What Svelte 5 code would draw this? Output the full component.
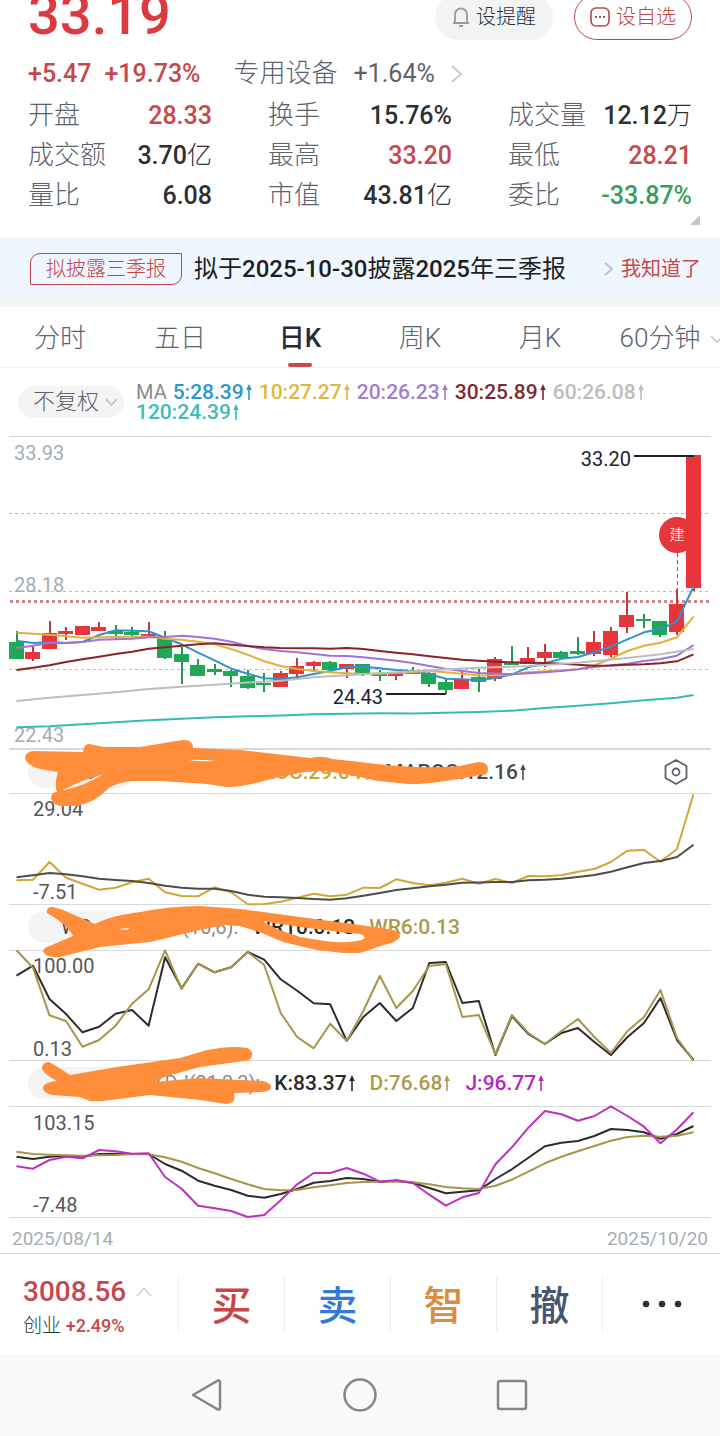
<script>
  // label, figure, unit, tone
  const stats = [
    ['开盘', '28.33', '', 'up'], ['换手', '15.76%', '', ''], ['成交量', '12.12', '万', ''],
    ['成交额', '3.70', '亿', ''], ['最高', '33.20', '', 'up'], ['最低', '28.21', '', 'up'],
    ['量比', '6.08', '', ''], ['市值', '43.81', '亿', ''], ['委比', '-33.87%', '', 'down']
  ];
  const tabs = ['分时', '五日', '日K', '周K', '月K', '60分钟'];
  let active = $state('日K');

  const averages = [
    ['5:28.39', '#2b97cf'], ['10:27.27', '#dcb93c'], ['20:26.23', '#a07fd0'],
    ['30:25.89', '#7f2a2e'], ['60:26.08', '#bdbdbd'], ['120:24.39', '#3dbdb6']
  ];

  const STEP = 677 / 41;
  const px = (i) => 16.5 + i * STEP;
  const line = (ys) => ys.map((y, i) => `${px(i).toFixed(1)},${y}`).join(' ');
  const sparse = (pts) => pts.map(([i, y]) => `${px(i).toFixed(1)},${y}`).join(' ');

  // direction, body top, body bottom, wick top, wick bottom
  const candles = [
    ['g', 642, 659, 631, 659], ['r', 652, 659, 646, 661], ['r', 633, 649, 621, 649], ['r', 631, 634, 627, 640],
    ['r', 626, 635, 626, 635], ['r', 627, 631, 622, 631], ['g', 631, 634, 625, 639], ['g', 632, 635, 627, 636],
    ['r', 634, 636, 622, 636], ['g', 639, 658, 631, 659], ['g', 654, 662, 647, 684], ['g', 665, 676, 659, 676],
    ['g', 669, 672, 664, 675], ['g', 671, 676, 670, 687], ['g', 676, 688, 670, 689], ['g', 683, 685, 673, 692],
    ['r', 673, 687, 671, 687], ['r', 666, 674, 658, 677], ['r', 662, 666, 661, 671], ['g', 662, 670, 661, 672],
    ['r', 664, 669, 664, 678], ['g', 664, 673, 664, 676], ['g', 674, 676, 670, 681], ['r', 673, 676, 673, 680],
    ['g', 672, 674, 667, 674], ['g', 673, 684, 672, 687], ['g', 682, 690, 679, 694], ['r', 679, 689, 670, 689],
    ['g', 677, 682, 669, 692], ['r', 659, 679, 657, 681], ['g', 663, 665, 646, 665], ['r', 658, 664, 647, 664],
    ['r', 652, 658, 644, 667], ['g', 652, 658, 651, 658], ['g', 651, 654, 637, 655], ['r', 642, 654, 631, 656],
    ['r', 631, 655, 627, 657], ['r', 615, 627, 592, 633], ['g', 619, 621, 614, 628], ['g', 621, 635, 621, 637],
    ['r', 604, 632, 589, 635], ['r', 455, 588, 455, 591]
  ];

  const ma5 = [640.7, 643, 642, 643, 642, 635, 630.3, 630.7, 631.3, 637.7, 644.3, 652.7, 660.3, 668.7, 673.7, 678.3, 679, 677.3, 674, 671, 667, 666.7, 668.3, 670, 671, 674, 678.7, 679.3, 680.3, 678, 674.3, 667.3, 663.3, 658.7, 657, 652.3, 646.7, 639.3, 632.3, 629, 621.3, 586.7];
  const ma10 = [632.7, 633.7, 634.7, 636.3, 637.7, 637.3, 637, 636.7, 636.7, 638.7, 639.7, 641.7, 644.3, 649, 654.7, 661.3, 666, 669, 671, 672.3, 673.3, 674, 673.5, 673, 672, 671, 672.3, 673.7, 675.5, 675.3, 674.3, 672.3, 671.3, 670.3, 669.3, 665.3, 658.7, 651, 645.7, 642.7, 637.3, 616.7];
  const ma20 = [648, 645.7, 642.7, 643, 642, 639.7, 639.3, 638.7, 637.3, 637, 635.7, 637, 638.7, 641.7, 646, 649, 651, 652.3, 654, 655.7, 656, 657.3, 659, 660.7, 663, 666, 668.7, 671, 673, 673.5, 674.3, 673.3, 672.3, 671, 669.3, 667, 665.3, 663.7, 661, 659, 655.7, 645];
  const ma30 = [670, 667.7, 665.3, 662, 659.3, 656.7, 654, 651.7, 648.7, 647.3, 645.7, 644.3, 643.3, 644.7, 646, 647.3, 648, 648.3, 648.3, 648.7, 648, 649, 651, 652.7, 654.3, 656.3, 658, 659.7, 660.7, 661.7, 662.3, 662.7, 663, 663.7, 664.7, 665.7, 665.5, 664.7, 664.3, 663.3, 661.3, 654.3];
  const ma60 = [[0, 701], [2, 697.7], [4, 695], [6, 692.3], [8, 689], [10, 686.7], [12, 684.7], [14, 682.5], [16, 680.7], [18, 677.3], [20, 675.3], [22, 673.3], [24, 671.3], [26, 669.3], [28, 667.7], [31, 666], [33, 664], [35, 661.3], [37, 658], [39, 654.3], [41, 649]];
  const ma120 = [[0, 727.3], [2, 726.3], [4, 724.3], [6, 722.3], [8, 720.3], [10, 718.7], [12, 717.3], [14, 716.3], [16, 715.5], [18, 714.3], [20, 713.7], [22, 713.3], [24, 713.5], [26, 712.7], [28, 712], [30, 710.7], [32, 708], [34, 705.7], [36, 703.3], [38, 700.3], [40, 697.7], [41, 695]];

  const roc = [880.3, 879.7, 862, 877.7, 883.7, 889.7, 887.7, 882.3, 878.7, 892.3, 896, 896.3, 887.3, 892.3, 904.3, 904, 901.7, 897.7, 893.7, 896.3, 894.7, 887.7, 888, 879.3, 883, 885.3, 882.7, 878.7, 883.7, 879, 883, 876, 876.3, 875.3, 871.7, 869, 862, 850.7, 850, 861.7, 849, 794.3];
  const maroc = [877.3, 875.3, 873, 874.3, 876.3, 878.7, 880, 881, 883, 885.7, 887.7, 888.7, 888.7, 891, 894.7, 896.7, 897.3, 898, 899, 899.7, 898.3, 895.7, 893, 890, 888.3, 886.3, 884.7, 882.7, 882.5, 882, 882, 880.3, 879.7, 878.7, 877, 875, 871.7, 867.3, 863, 861, 857, 844.7];
  const wr10 = [975.7, 965.7, 999, 1014, 1032.3, 1026.7, 1013.7, 1010, 1025.7, 957.3, 988.3, 963.7, 972.3, 967.3, 952, 959.7, 979.3, 990.7, 1003.3, 1004.3, 1041, 1017, 1003, 1021, 1008, 963, 962, 1003, 1001, 1055, 1016, 1034, 1044, 1033, 1028, 1042, 1055, 1037, 1023, 998, 1040, 1060];
  const wr6 = [950.3, 967.7, 1015.3, 1021, 1046.7, 1040, 1025.7, 1003.7, 989.3, 950.3, 989, 963.7, 972.3, 967.3, 952, 965, 1013, 1037, 1048.3, 1023.7, 1041, 1011, 976, 1008, 991, 966, 964, 1017, 1015, 1054, 1015, 1033, 1044, 1031, 1019, 1037, 1053, 1031, 1017, 990, 1038, 1061];
  const kLine = [1156.7, 1159, 1156.7, 1155.7, 1156.7, 1154, 1153.7, 1154, 1154, 1164, 1170.7, 1180.7, 1185.7, 1190, 1195.7, 1197.7, 1194, 1189, 1182.7, 1181, 1178, 1179, 1181.7, 1181, 1182.7, 1188, 1193.3, 1191.7, 1190.3, 1179, 1169.3, 1157.7, 1146.3, 1142.7, 1141, 1136, 1129, 1130, 1132.3, 1138.7, 1134, 1126];
  const dLine = [1151.7, 1154, 1154.7, 1155.3, 1155.7, 1155.3, 1155, 1154.3, 1154.3, 1157.3, 1161.7, 1168, 1173.3, 1179, 1184.3, 1189, 1190.3, 1190, 1187.3, 1185.3, 1183, 1182, 1181.7, 1181.3, 1182.3, 1184.3, 1187, 1188.3, 1189, 1185.7, 1179.7, 1171.7, 1163.3, 1156.7, 1151.3, 1146, 1140.7, 1137, 1135.7, 1136.7, 1135.7, 1132.3];
  const jLine = [1166.3, 1168.7, 1160, 1156.7, 1158.3, 1150, 1151.3, 1153.7, 1153.3, 1177, 1188.7, 1205.7, 1208.3, 1211, 1217, 1215, 1200.3, 1184.3, 1173, 1173, 1168, 1173.7, 1181.7, 1180, 1183, 1194.7, 1205.7, 1197.3, 1193, 1164.3, 1147.3, 1127.7, 1111, 1114.3, 1120.7, 1116, 1106.3, 1116, 1126.7, 1143.3, 1129.3, 1112.3];

  const actions = [['买', '#c94545'], ['卖', '#337ad8'], ['智', '#d98d3e'], ['撤', '#47566e']];
</script>

{#snippet arrow()}
  <svg class="arrow" viewBox="0 0 8 16" aria-hidden="true"><path d="M4 0 6.800 6H4.800V16H3.200V6H1.200Z" fill="currentColor" /></svg>
{/snippet}

{#snippet reading(text, color, up)}
  <span class="reading" style:color={color}>{text}{#if up}{@render arrow()}{/if}</span>
{/snippet}

<main>
  <section class="quote">
    <div class="top">
      <strong class="price">33.19</strong>
      <button class="pill remind">
        <svg width="18" height="20" viewBox="0 0 18 20" fill="none" stroke="#9b9b9b" stroke-width="1.800" aria-hidden="true">
          <path d="M1 16H17M3 16V7.500a6 6 0 0 1 12 0V16M7 19H11" />
        </svg>
        设提醒
      </button>
      <button class="pill watch">
        <svg width="20" height="20" viewBox="0 0 20 20" fill="none" stroke="currentColor" aria-hidden="true">
          <rect x="1" y="1" width="18" height="18" rx="5" stroke-width="1.600" />
          <path d="M5 10h2M9 10h2M13 10h2" stroke-width="2" />
        </svg>
        设自选
      </button>
    </div>
    <div class="change">
      <span class="num up">+5.47</span>
      <span class="num up">+19.73%</span>
      <a class="sector" href="#sector">专用设备 <span>+1.64%</span>
        <svg width="12" height="20" viewBox="0 0 12 20" fill="none" stroke="#c9cbce" stroke-width="2" aria-hidden="true"><path d="M1 2 10 10 1 18" /></svg>
      </a>
    </div>
    <dl class="stats">
      {#each stats as [label, figure, unit, tone]}
        <div><dt>{label}</dt><dd class={tone}>{figure}{#if unit}<span>{unit}</span>{/if}</dd></div>
      {/each}
    </dl>
    <svg class="corner" width="10" height="10" viewBox="0 0 10 10" aria-hidden="true"><path d="M10 0V10H0Z" fill="#c4c8cb" /></svg>
  </section>

  <section class="notice">
    <span class="tag">拟披露三季报</span>
    <a class="headline" href="#report">拟于<b>2025-10-30</b>披露<b>2025</b>年三季报</a>
    <svg width="9" height="14" viewBox="0 0 9 14" fill="none" stroke="#bcc2c9" stroke-width="2" aria-hidden="true"><path d="M1 1 8 7 1 13" /></svg>
    <button class="ack">我知道了</button>
  </section>

  <nav class="tabs">
    {#each tabs as tab}
      <button class:active={active === tab} onclick={() => (active = tab)}>{tab}</button>
    {/each}
    <svg class="more" width="12" height="8" viewBox="0 0 12 8" fill="none" stroke="#c4c7ca" stroke-width="1.500" aria-hidden="true"><path d="M1 1 7 7 13 1" /></svg>
  </nav>

  <section class="averages">
    <button class="adjust">不复权
      <svg width="13" height="8" viewBox="0 0 13 8" fill="none" stroke="#b9bbbe" stroke-width="1.500" aria-hidden="true"><path d="M1 1 6.500 7 12 1" /></svg>
    </button>
    <div class="legend">
      <span class="ma">MA</span>
      {#each averages as [text, color]}{@render reading(text, color, true)}{/each}
    </div>
  </section>

  <section class="charts">
    <svg class="plot" viewBox="0 436 720 312" role="img" aria-label="日K线">
      <path class="rule" d="M9 436.500H711" />
      <path d="M9 513.500H711M9 591.500H711M9 669.500H711" stroke="#b9bfc2" stroke-dasharray="3 3" />
      <path d="M10 601.500H711" stroke="#c98a88" stroke-width="3" stroke-dasharray="3 3" />
      <g class="axis soft">
        <text x="14" y="460">33.93</text><text x="14" y="592">28.18</text><text x="14" y="742">22.43</text>
      </g>
      <circle cx="677" cy="535" r="18" fill="#e8343b" />
      <path d="M677.500 553V590" stroke="#ad4b50" stroke-dasharray="4 3" />
      {#each candles as [dir, top, bottom, high, low], i}
        <g fill={dir === 'r' ? '#e8343b' : '#1fa855'}>
          <rect x={Math.round(px(i)) - 1} y={high} width="2" height={low - high} fill={dir === 'r' ? '#c13c40' : '#2b9350'} />
          <rect x={Math.round(px(i)) - 8} y={top} width="15" height={bottom - top} />
        </g>
      {/each}
      <text class="mark" x="677" y="540" text-anchor="middle">建</text>
      <g class="curve">
        <polyline points={line(ma5)} stroke="#2f93cc" />
        <polyline points={line(ma10)} stroke="#e2b23a" />
        <polyline points={line(ma20)} stroke="#a173d6" />
        <polyline points={line(ma30)} stroke="#8b2328" />
        <polyline points={sparse(ma60)} stroke="#bdbdbd" />
        <polyline points={sparse(ma120)} stroke="#34bdb8" />
      </g>
      <path d="M634 456H694M386 694H446" stroke="#20202c" stroke-width="2" />
      <g class="axis dark">
        <text x="631" y="466" text-anchor="end">33.20</text><text x="383" y="704" text-anchor="end">24.43</text>
      </g>
    </svg>

    <div class="bar thick">
      <button class="chip">ROC</button>
      <div class="values">
        <span class="formula">ROC(12,6):</span>
        {@render reading('ROC:29.04', '#c3a62f', true)}
        {@render reading('MAROC:12.16', '#4a4a4a', true)}
      </div>
      <button class="settings" aria-label="指标设置">
        <svg width="24" height="26" viewBox="0 0 24 26" fill="none" stroke="#5d6068" stroke-width="1.800"><path d="M12 1 22.500 7V19L12 25 1.500 19V7Z" stroke-linejoin="round" /><circle cx="12" cy="13" r="3.500" /></svg>
      </button>
    </div>
    <svg class="plot" viewBox="0 794 720 110" role="img" aria-label="ROC">
      <path class="rule" d="M9 793.500H711M9 904.500H711" />
      <g class="axis"><text x="33" y="816">29.04</text><text x="33" y="899">-7.51</text></g>
      <g class="curve"><polyline points={line(roc)} stroke="#d0a736" /><polyline points={line(maroc)} stroke="#4c4c4c" /></g>
    </svg>

    <div class="bar">
      <button class="chip">WR</button>
      <div class="values">
        <span class="formula">WR(10,6):</span>
        {@render reading('WR10:0.13', '#2a2a2a', false)}
        {@render reading('WR6:0.13', '#ac9a4a', false)}
      </div>
    </div>
    <svg class="plot" viewBox="0 950 720 110" role="img" aria-label="WR">
      <path class="rule" d="M9 950.500H711M9 1060.500H711" />
      <g class="axis"><text x="33" y="973">100.00</text><text x="33" y="1056">0.13</text></g>
      <g class="curve"><polyline points={line(wr10)} stroke="#2c2c30" /><polyline points={line(wr6)} stroke="#a7964a" /></g>
    </svg>

    <div class="bar">
      <button class="chip">KDJ</button>
      <div class="values">
        <span class="formula">KDJ(21,3,3):</span>
        {@render reading('K:83.37', '#2a2a2a', true)}
        {@render reading('D:76.68', '#ac9a4a', true)}
        {@render reading('J:96.77', '#b926bb', true)}
      </div>
    </div>
    <svg class="plot" viewBox="0 1106 720 112" role="img" aria-label="KDJ">
      <path class="rule" d="M9 1106.500H711M9 1217.500H711" />
      <g class="axis"><text x="33" y="1130">103.15</text><text x="33" y="1212">-7.48</text></g>
      <g class="curve"><polyline points={line(kLine)} stroke="#2c2c2c" /><polyline points={line(dLine)} stroke="#a7964a" /><polyline points={line(jLine)} stroke="#c02ec2" /></g>
    </svg>

    <div class="dates"><time>2025/08/14</time><time>2025/10/20</time></div>

    <!-- freehand marker strokes over the indicator captions -->
    <svg class="marker" viewBox="0 436 720 817" aria-hidden="true">
      <path d="M25 758Q26 751 34 751L83 752Q84 744 89 744L104 747 140 747 182 740Q193 739 193 748L240 750 310 758Q323 755 332 759L360 762Q420 770 460 766L478 762Q488 762 488 769T480 775Q430 785 408 784L378 781 350 775 325 771 305 772 275 778Q240 788 227 787L207 784 160 781 130 781Q114 784 109 788 92 805 73 806H60Q51 804 51 797 52 792 57 792 54 785 58 772L40 769Q26 765 25 758ZM63 790Q82 787 102 775 84 779 63 790ZM189 760Q200 759 215 761 200 762 189 760Z" />
      <path d="M47 913Q46 906 53 907 62 909 72 914L95 924Q110 916 140 912 170 906 200 906L240 909 300 917 360 925 387 929Q400 930 400 937 397 942 384 945L360 953H343L317 950 283 942 262 933 240 926 225 925 200 930 150 942 100 947 60 957Q45 958 43 951 44 947 52 945L73 936Q68 925 47 913ZM119 929Q124 928 130 928 128 931 119 929ZM262 921Q280 924 300 927L340 932 360 934Q368 937 362 940 345 944 325 941L300 937 277 929Z" />
      <path d="M42 1069Q42 1062 49 1062 55 1065 70 1075L117 1067 180 1058 207 1050Q233 1045 247 1048 253 1050 252 1056 251 1061 244 1061L200 1067 167 1076 153 1082 200 1078 263 1081Q271 1083 271 1087T263 1092L234 1093Q237 1104 226 1104L200 1100 150 1095 103 1101H90L80 1097 52 1095Q43 1093 43 1087 45 1082 57 1081 44 1074 42 1069Z" />
    </svg>
  </section>

  <footer class="trade">
    <button class="index">
      <span class="level">3008.56</span>
      <svg width="16" height="10" viewBox="0 0 16 10" fill="none" stroke="#cfcfcf" stroke-width="1.500" aria-hidden="true"><path d="M1 9 8 1 15 9" /></svg>
      <span class="board">创业 <b>+2.49%</b></span>
    </button>
    {#each actions as [label, color]}
      <button class="act word" style:color={color}>{label}</button>
    {/each}
    <button class="act" aria-label="更多">
      <svg width="40" height="8" viewBox="0 0 40 8" fill="#2e2e2e"><circle cx="4" cy="4" r="3.200" /><circle cx="20" cy="4" r="3.200" /><circle cx="36" cy="4" r="3.200" /></svg>
    </button>
  </footer>

  <nav class="system">
    <button aria-label="返回"><svg width="32" height="34" viewBox="2 0 32 34"><path d="M3 17 28 2.500Q30 2 30 4V30Q30 32 28 31.500Z" /></svg></button>
    <button aria-label="主页"><svg width="34" height="34" viewBox="0 0 34 34"><circle cx="17" cy="17" r="15.500" /></svg></button>
    <button aria-label="最近"><svg width="32" height="32" viewBox="0 0 32 32"><rect x="2" y="2" width="28" height="28" rx="2" /></svg></button>
  </nav>
</main>

<style>
  :global(body) { background: #fff; }
  main { font-family: Roboto, "Noto Sans CJK SC", sans-serif; line-height: 1.2; color: #2d2f33; background: #fff; overflow: hidden; }
  button { font: inherit; color: inherit; border: 0; background: none; padding: 0; margin: 0; cursor: pointer; }
  a { color: inherit; text-decoration: none; }
  svg { flex: none; }
  .up { color: #c8474b; }
  .down { color: #35a05a; }

  .quote { position: relative; height: 237px; box-sizing: border-box; }
  .top { display: flex; align-items: flex-end; gap: 21px; height: 40px; padding: 0 28px; }
  .price { margin-right: auto; font-size: 56px; line-height: 50px; font-weight: 500; color: #dc3a41; }
  .pill { display: flex; align-items: center; justify-content: center; gap: 6px; box-sizing: border-box; width: 118px; height: 46px; border-radius: 23px; font-size: 20px; font-weight: 300; }
  .remind { background: #f3f3f3; color: #2b323c; }
  .watch { border: 1px solid #b9474a; color: #b9474a; }
  .change { display: flex; align-items: center; gap: 13px; height: 56px; padding: 12px 28px 0; box-sizing: border-box; font-size: 25px; }
  .num { font-weight: 500; }
  .sector { display: flex; align-items: center; gap: 16px; margin-left: 20px; font-size: 26px; font-weight: 300; color: #5c636d; }
  .sector span { font-size: 25px; font-weight: 400; }
  .stats { display: grid; grid-template-columns: repeat(3, 1fr); column-gap: 56px; margin: 0; padding: 0 28px; }
  .stats div { display: flex; justify-content: space-between; align-items: center; height: 40px; }
  dt { font-size: 26px; font-weight: 300; color: #5c636d; }
  dd { margin: 0; font-size: 25px; font-weight: 500; white-space: nowrap; }
  dd span { font-weight: 300; }
  .corner { position: absolute; right: 20px; bottom: 12px; }

  .notice { display: flex; align-items: center; box-sizing: border-box; height: 70px; padding: 2px 19px 0 30px; background: #f0f6fe; border-bottom: 8px solid #f4f4f4; }
  .tag { box-sizing: border-box; width: 152px; height: 32px; line-height: 30px; text-align: center; border: 1px solid #b9474a; border-radius: 10px 0; font-size: 20px; font-weight: 300; color: #c0484b; }
  .headline { margin: 0 auto 0 12px; font-size: 24px; font-weight: 400; color: #1d1f22; white-space: nowrap; }
  .headline b { font-weight: 500; }
  .ack { margin-left: 8px; font-size: 20px; color: #c8474b; }

  .tabs { position: relative; display: grid; grid-template-columns: repeat(6, 1fr); height: 60px; border-bottom: 1px solid #efefef; }
  .tabs button { position: relative; padding-top: 4px; font-size: 26px; font-weight: 300; color: #5c636d; }
  .tabs .active { font-weight: 500; color: #242c38; }
  .tabs .active::after { content: ""; position: absolute; left: 50%; bottom: 0; width: 24px; height: 4px; margin-left: -12px; border-radius: 2px; background: #c94549; }
  .more { position: absolute; right: -2px; top: 28px; }

  .averages { display: flex; align-items: flex-start; gap: 12px; height: 68px; box-sizing: border-box; padding: 14px 14px 0 18px; }
  .adjust { display: flex; flex: none; align-items: center; gap: 6px; box-sizing: border-box; width: 106px; height: 32px; margin-top: 4px; padding-left: 15px; border-radius: 16px; background: #f4f4f4; font-size: 22px; font-weight: 300; color: #5c636d; }
  .legend { display: flex; flex-wrap: wrap; column-gap: 6px; }
  .ma { font-size: 20px; line-height: 20px; color: #8b8b8b; }
  .reading { display: inline-flex; align-items: center; gap: 1px; font-size: 21px; line-height: 20px; font-weight: 500; white-space: nowrap; }
  .arrow { width: 8px; height: 16px; }

  .charts { position: relative; }
  .plot { display: block; width: 100%; height: auto; overflow: visible; fill: none; }
  .rule { stroke: #d9d9d9; }
  .curve { stroke-width: 2; stroke-linejoin: round; }
  .axis { font-size: 20px; fill: #55565a; }
  .soft { fill: #a5adb4; }
  .dark { fill: #22222e; }
  .mark { font-size: 15px; font-weight: 300; fill: #fff; }
  .bar { display: flex; align-items: center; height: 46px; padding: 0 32px 0 28px; }
  .bar.thick { height: 44px; border-top: 2px solid #d9d9d9; margin: 0 9px; padding: 0 23px 0 19px; }
  .chip { box-sizing: border-box; width: 106px; height: 32px; padding-right: 10px; border-radius: 16px; background: #f4f4f4; font-size: 20px; color: #4d525a; }
  .values { display: flex; align-items: center; gap: 14px; margin: 0 auto 0 18px; }
  .formula { font-size: 20px; line-height: 20px; color: #8b8b8b; }
  .settings { display: flex; }
  .dates { display: flex; justify-content: space-between; align-items: center; height: 35px; padding: 8px 12px 0; box-sizing: border-box; font-size: 19px; color: #a5adb4; }
  .marker { position: absolute; inset: 0; width: 100%; height: auto; fill: #ff8d3a; fill-rule: evenodd; pointer-events: none; }

  .trade { display: grid; grid-template-columns: 178fr repeat(4, 106fr) 118fr; align-items: center; height: 100px; border-top: 1px solid #d9d9d9; }
  .index { display: grid; grid-template-columns: auto 1fr; align-items: center; column-gap: 10px; padding: 6px 0 0 23px; text-align: left; }
  .level { font-size: 28px; line-height: 38px; font-weight: 500; color: #c8474b; }
  .board { grid-column: 1 / -1; font-size: 19px; line-height: 30px; font-weight: 300; color: #2b323c; }
  .board b { font-size: 18px; font-weight: 500; color: #c8474b; }
  .act { box-sizing: border-box; height: 54px; border-left: 1px solid #ececec; }
  .word { padding-top: 6px; font-size: 40px; line-height: 48px; font-weight: 500; }
  .act svg { display: block; margin: 0 auto; }
  .system { display: flex; align-items: center; justify-content: center; gap: 120px; height: 82px; background: #fafafa; }
  .system button { display: flex; justify-content: center; width: 32px; }
  .system svg { fill: none; stroke: #868686; stroke-width: 2.5; }
</style>
